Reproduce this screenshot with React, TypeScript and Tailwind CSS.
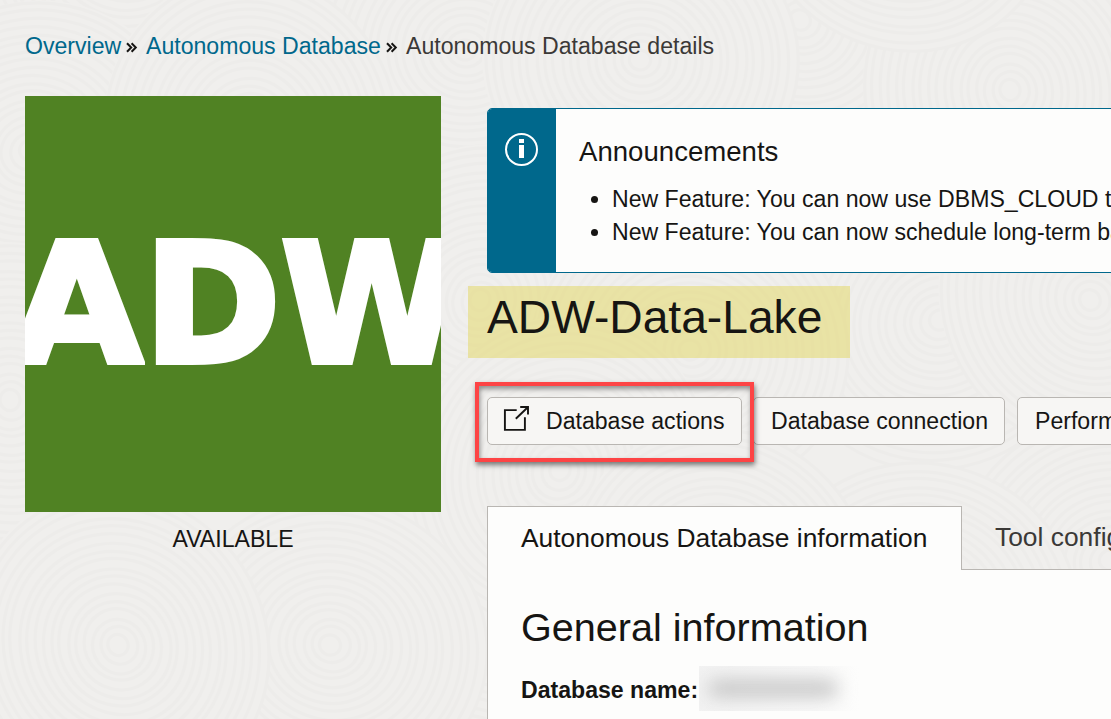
import React from 'react';

const RINGS = Array.from({ length: 18 }, (_, i) => 10 + i * 8);

const SWIRLS: [number, number][] = [
  [465, 50], [800, 20], [1010, 90], [130, -70], [30, 150], [640, 60], [900, -100],
  [250, 130], [480, 300], [940, 320], [690, 350], [1090, 300], [10, 400], [560, 470],
  [1110, 560], [920, 610], [720, 580], [460, 810], [220, 830], [0, 830], [330, 645], [118, 645],
];

function Backdrop() {
  return (
    <svg className="pointer-events-none absolute inset-0 h-[719px] w-[1111px]" viewBox="0 0 1111 719" aria-hidden="true">
      {SWIRLS.map(([x, y], k) => (
        <g key={k} transform={`rotate(${(k * 37) % 180} ${x} ${y})`}>
          <ellipse cx={x} cy={y} rx={158} ry={146} fill="#f0efed" />
          {RINGS.map((r, i) => (
            <ellipse key={r} cx={x + (i % 3)} cy={y - (i % 2)} rx={r * 1.07} ry={r} fill="none" stroke="#edecea" strokeWidth="3.2" />
          ))}
        </g>
      ))}
    </svg>
  );
}

function Chevrons() {
  return (
    <svg className="mt-[3px] h-[11px] w-[12px]" viewBox="0 0 12 11" fill="none" stroke="#161513" strokeWidth="2">
      <path d="M1 1.2 5.2 5.5 1 9.8M5.6 1.2 9.8 5.5 5.6 9.8" />
    </svg>
  );
}

function InfoIcon() {
  return (
    <svg className="h-[33px] w-[33px]" viewBox="0 0 33 33" fill="none">
      <circle cx="16.5" cy="16.5" r="15.5" stroke="#fff" strokeWidth="2" />
      <path d="M14 6h5v4h-5zM14 12h5v13h-5z" fill="#fff" />
    </svg>
  );
}

function LaunchIcon() {
  return (
    <svg className="mb-[6px] h-[26px] w-[26px]" viewBox="0 0 26 26" fill="none" stroke="#161513" strokeWidth="1.9">
      <path d="M13.7 5.1H1.9V24.9H21.9V12.3M17.2 2H25V9.4M24.8 2.2 12.8 13.8" />
    </svg>
  );
}

export default function App() {
  return (
    <div className="relative h-[719px] w-[1111px] overflow-hidden bg-[#f0efed] font-['Liberation_Sans',Arial,sans-serif] text-[23.1px] leading-[32px] whitespace-nowrap text-[#161513]">
      <Backdrop />
      <div className="relative flex h-full flex-col">
        <nav className="flex h-[96px] shrink-0 items-center pb-1 pl-[25px]">
          <a className="w-[101px] text-[#00688c]">Overview</a>
          <Chevrons />
          <a className="ml-[8px] w-[240px] text-[#00688c]">Autonomous Database</a>
          <Chevrons />
          <span className="ml-[8px] text-[#3b3937]">Autonomous Database details</span>
        </nav>

        <div className="flex min-h-0 flex-1 pl-[25px]">
          <aside className="w-[416px] shrink-0">
            <div className="flex h-[416px] items-center overflow-hidden bg-[#508223] pt-[3px] font-['DejaVu_Sans',sans-serif] text-[165px] leading-none font-bold text-white [-webkit-text-stroke:6px_white]">
              <span className="-ml-[14px] shrink-0 origin-left scale-x-103">A</span>
              <span className="ml-[5px] shrink-0">D</span>
              <span className="shrink-0">W</span>
            </div>
            <p className="mt-[11px] text-center">AVAILABLE</p>
          </aside>

          <main className="ml-[46px] w-[700px] shrink-0 pt-[12px]">
            <section className="flex h-[165px] overflow-hidden rounded-[5px] border border-[#00688c] bg-[#fdfdfc]">
              <div className="w-[68px] shrink-0 bg-[#00688c] pt-[24px] pl-[17px]">
                <InfoIcon />
              </div>
              <div className="pt-[25px] pl-[23px]">
                <h3 className="text-[27.6px] leading-[36px]">Announcements</h3>
                <ul className="mt-[13px] list-disc pl-[33px] leading-[33px]">
                  <li>New Feature: You can now use DBMS_CLOUD to</li>
                  <li>New Feature: You can now schedule long-term backups</li>
                </ul>
              </div>
            </section>

            <h1 className="mt-[13px] -ml-[19px] h-[72px] w-[382px] bg-[#e4db75]/60 pl-[19px] text-[46.2px] leading-[63px]">ADW-Data-Lake</h1>

            <div className="mt-[24px] flex h-[80px]">
              <div className="relative -ml-[12px] h-[80px] w-[279px] shrink-0 border-4 border-[#fd4445] pt-[11px] pl-[8px] shadow-[1px_3px_5px_rgba(0,0,0,0.5),inset_1px_3px_5px_rgba(0,0,0,0.4)]">
                <button className="flex h-[48px] w-[255px] items-center rounded-[5px] border border-[#b9b6b2] bg-[#f7f6f4] pl-[15px]">
                  <LaunchIcon />
                  <span className="ml-[17px]">Database actions</span>
                </button>
              </div>
              <button className="mt-[15px] -ml-px h-[48px] w-[252px] shrink-0 rounded-[5px] border border-[#b9b6b2] bg-[#f7f6f4] pl-[17px] text-left">Database connection</button>
              <button className="mt-[15px] ml-[12px] h-[48px] w-[250px] shrink-0 rounded-[5px] border border-[#b9b6b2] bg-[#f7f6f4] pl-[17px] text-left">Performance hub</button>
            </div>

            <div className="mt-[44px] flex h-[64px] text-[26.4px]">
              <div className="w-[475px] shrink-0 border border-b-0 border-[#b9b6b2] bg-[#fdfdfc] pt-[15px] pl-[33px]">Autonomous Database information</div>
              <div className="flex-1 border-b border-[#b9b6b2] pt-[15px] pl-[33px] text-[#3b3937]">Tool configuration</div>
            </div>
            <section className="h-[200px] border-l border-[#b9b6b2] bg-[#fdfdfc] pt-[32px] pl-[33px]">
              <h2 className="text-[39.6px] leading-[50px]">General information</h2>
              <div className="mt-[14px] flex">
                <strong className="mt-[8px] w-[178px]">Database name:</strong>
                <span className="flex h-[45px] w-[160px] items-center overflow-hidden bg-linear-to-r from-[#f2f2f2] via-[#f8f8f8] via-70% to-[#fdfdfc] pl-[9px]">
                  <span className="h-[17px] w-[130px] rounded-full bg-[#c6c6c6] blur-[9px]" />
                </span>
              </div>
            </section>
          </main>
        </div>
      </div>
    </div>
  );
}
